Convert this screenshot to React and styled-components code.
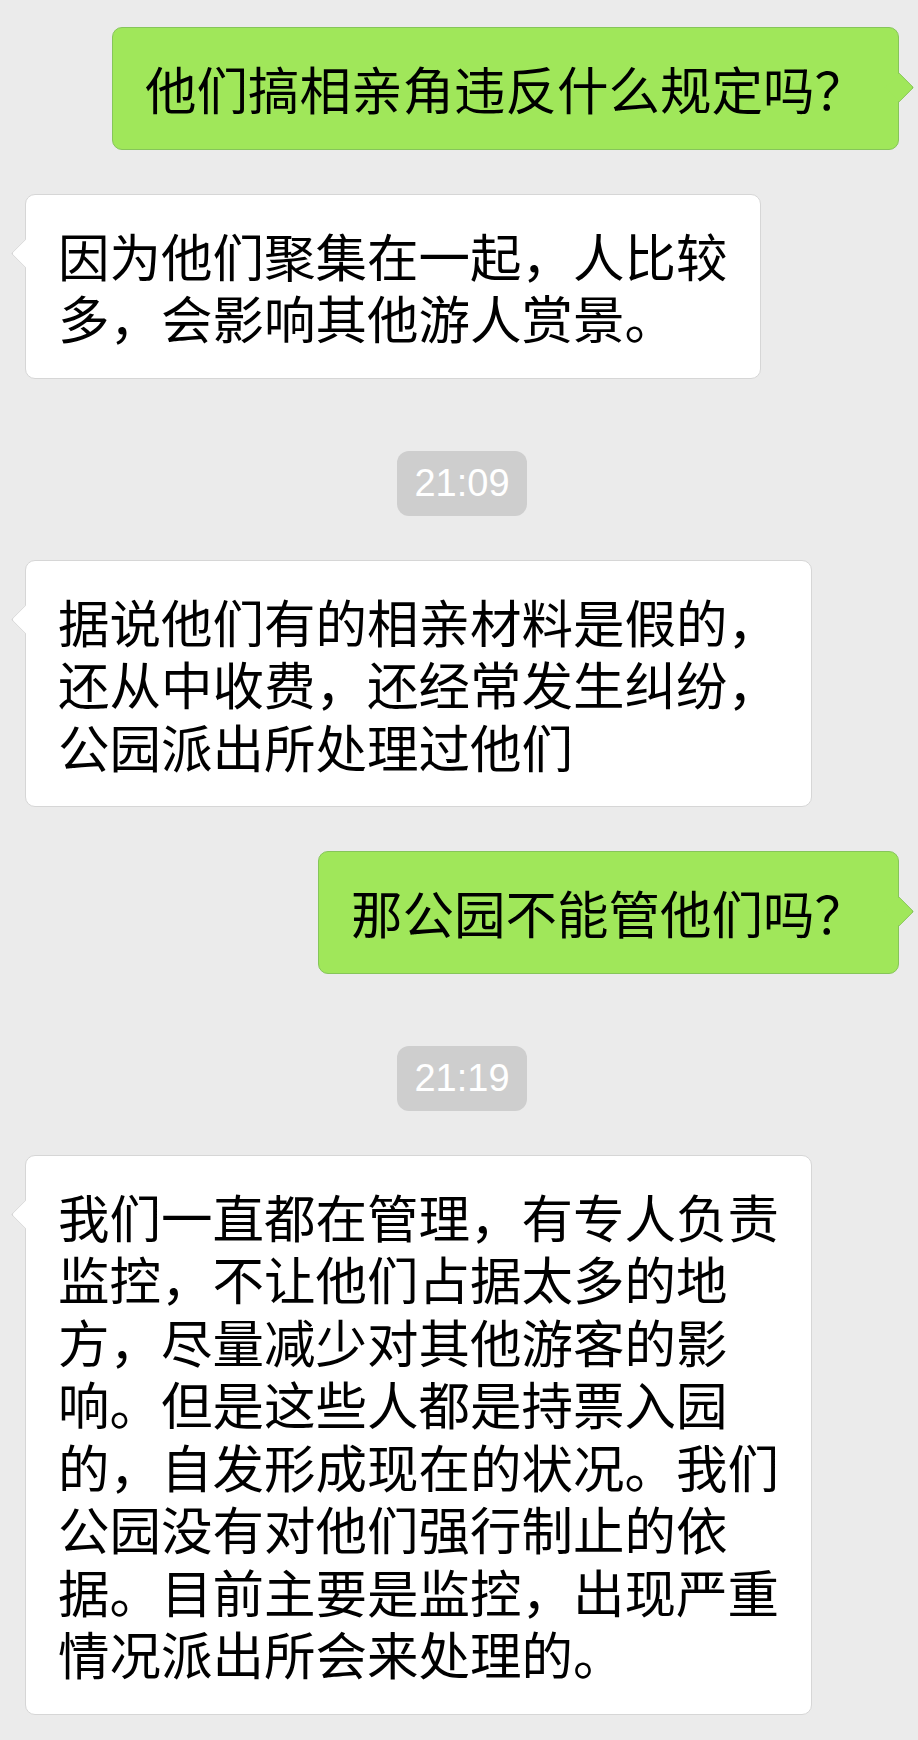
import React from 'react';
import styled, { createGlobalStyle } from 'styled-components';

const GlobalStyle = createGlobalStyle`
  html, body {
    margin: 0;
    padding: 0;
    overflow: hidden;
    background: #ebebeb;
  }
`;

const messages = [
  { kind: 'out', lines: ['他们搞相亲角违反什么规定吗？'] },
  { kind: 'in', lines: ['因为他们聚集在一起，人比较', '多，会影响其他游人赏景。'] },
  { kind: 'time', text: '21:09' },
  {
    kind: 'in',
    lines: ['据说他们有的相亲材料是假的，', '还从中收费，还经常发生纠纷，', '公园派出所处理过他们'],
  },
  { kind: 'out', lines: ['那公园不能管他们吗？'] },
  { kind: 'time', text: '21:19' },
  {
    kind: 'in',
    lines: [
      '我们一直都在管理，有专人负责',
      '监控，不让他们占据太多的地',
      '方，尽量减少对其他游客的影',
      '响。但是这些人都是持票入园',
      '的，自发形成现在的状况。我们',
      '公园没有对他们强行制止的依',
      '据。目前主要是监控，出现严重',
      '情况派出所会来处理的。',
    ],
  },
];

const App = () => {
  return (
    <>
      <GlobalStyle />
      <Chat>
        {messages.map((msg, i) =>
          msg.kind === 'time' ? (
            <TimeRow key={i}>
              <TimeStamp>{msg.text}</TimeStamp>
            </TimeRow>
          ) : (
            <Row key={i} $out={msg.kind === 'out'}>
              <Bubble $out={msg.kind === 'out'}>
                {msg.lines.map((line, j) => (
                  <Line key={j}>{line}</Line>
                ))}
              </Bubble>
            </Row>
          )
        )}
      </Chat>
    </>
  );
};

const Chat = styled.div`
  display: flex;
  flex-direction: column;
  gap: 44px;
  padding: 27px 19px 0 25px;
  min-height: 1740px;
  box-sizing: border-box;
  background: #ebebeb;
`;

const Row = styled.div`
  display: flex;
  justify-content: ${(p) => (p.$out ? 'flex-end' : 'flex-start')};
`;

const Bubble = styled.div`
  position: relative;
  padding: 29px 32px;
  border-radius: 10px;
  border: 1px solid ${(p) => (p.$out ? '#86c55a' : '#d6d6d6')};
  background: ${(p) => (p.$out ? '#a0e75a' : '#ffffff')};
  color: #000;
  font-family: 'Noto Sans CJK SC', 'Noto Sans', sans-serif;
  font-size: 51.5px;
  line-height: 62.5px;

  &::after {
    content: '';
    position: absolute;
    top: 48.5px;
    ${(p) => (p.$out ? 'right: -11.5px;' : 'left: -11.5px;')}
    width: 21px;
    height: 21px;
    box-sizing: border-box;
    background: inherit;
    transform: rotate(45deg);
    ${(p) =>
      p.$out
        ? `
      border-top: 1px solid #86c55a;
      border-right: 1px solid #86c55a;
      border-top-right-radius: 3px;
    `
        : `
      border-left: 1px solid #d6d6d6;
      border-bottom: 1px solid #d6d6d6;
      border-bottom-left-radius: 3px;
    `}
  }
`;

const Line = styled.span`
  display: block;
  white-space: nowrap;
`;

const TimeRow = styled.div`
  display: flex;
  justify-content: center;
  margin-top: 28px;
  padding-right: 0;
`;

const TimeStamp = styled.span`
  display: inline-block;
  height: 65px;
  padding: 0 17px;
  border-radius: 12px;
  background: #cecece;
  color: #ffffff;
  font-family: 'Liberation Sans', Arial, sans-serif;
  font-size: 38px;
  line-height: 65px;
`;

export default App;
